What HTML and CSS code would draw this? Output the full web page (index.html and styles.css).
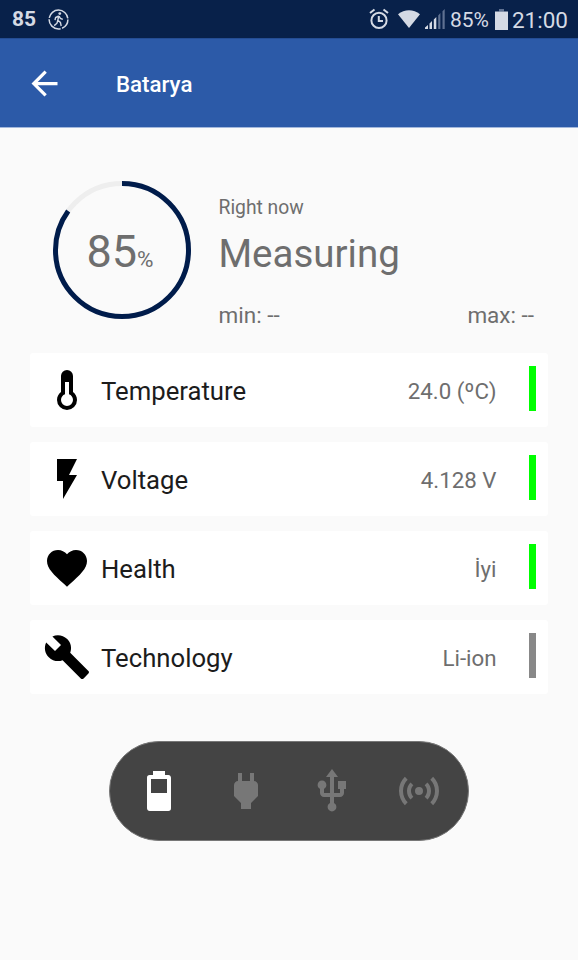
FILE: index.html
```
<!DOCTYPE html>
<html lang="tr">
<head>
  <meta charset="UTF-8" />
  <meta name="viewport" content="width=device-width, initial-scale=1.0"/>
  <title>Batarya</title>
  <link rel="stylesheet" href="styles.css">
</head>
<body>
  <div class="status-bar">
    <span class="status-level">85</span>
    <svg class="walk-icon" width="21" height="21" viewBox="0 0 21 21">
      <circle cx="10.5" cy="10.5" r="9.4" fill="none" stroke="#d5dae4" stroke-width="1.5" stroke-dasharray="11 1.5 17 1.5 26.5 1.5"/>
      <circle cx="11.8" cy="4.6" r="1.4" fill="#d5dae4"/>
      <path d="M10.8 6.8L9.8 11.3L12.4 13.4L13.2 17M9.8 11.3L9 14.2L6.2 16.6M10.8 7L7.6 8.6L7 11.2M11 7L12.4 9.4L14.8 10.4" fill="none" stroke="#d5dae4" stroke-width="1.4"/>
    </svg>
    <div class="status-right">
      <svg class="alarm-icon" width="20" height="22" viewBox="0 0 20 22">
        <circle cx="10" cy="12.4" r="7.6" fill="none" stroke="#d5dae4" stroke-width="2"/>
        <path d="M9.8 8v5h4.2M1 5L5.5 1.5M19 5L14.5 1.5" fill="none" stroke="#d5dae4" stroke-width="2"/>
      </svg>
      <svg class="wifi-icon" width="22" height="18" viewBox="0 0 22 18">
        <path d="M0 4.3C6.5-1.2 15.5-1.2 22 4.3L11 18z" fill="#d5dae4"/>
      </svg>
      <svg class="signal-icon" width="20" height="20" viewBox="0 0 20 20">
        <path d="M0 20v-1.5l3-2.5V20zM4.5 20v-5.5l2.5-2.5V20zM8.8 20v-9.5l2.5-2.5V20z" fill="#d5dae4"/>
        <path d="M13.2 20V6.5l2.2-2.5V20zM17.5 20V2.2L19.7 0V20z" fill="#5f7191"/>
      </svg>
      <span class="status-percent">85%</span>
      <svg class="battery-icon" width="13" height="21" viewBox="0 0 13 21">
        <path d="M4 0h5v2.5H4z" fill="#5f7191"/>
        <path d="M0 2.5h13V21H0z" fill="#d5dae4"/>
      </svg>
      <span class="status-clock">21:00</span>
    </div>
  </div>

  <div class="app-bar">
    <svg class="back-arrow" width="39" height="39" viewBox="0 0 24 24">
      <path d="M20 11H7.83l5.59-5.59L12 4l-8 8 8 8 1.41-1.41L7.83 13H20v-2z" fill="#fff"/>
    </svg>
    <h1 class="title">Batarya</h1>
  </div>

  <div class="summary">
    <div class="gauge">
      <svg width="138" height="138" viewBox="0 0 138 138">
        <circle class="gauge-track" cx="69" cy="69" r="66.5"/>
        <circle class="gauge-value" cx="69" cy="69" r="66.5" pathLength="100" transform="rotate(-90 69 69)"/>
      </svg>
      <div class="gauge-text">85<small>%</small></div>
    </div>
    <div class="current">
      <div class="current-label">Right now</div>
      <div class="current-state">Measuring</div>
      <div class="current-range">
        <span>min: --</span>
        <span>max: --</span>
      </div>
    </div>
  </div>

  <div class="cards">
    <div class="card">
      <svg class="card-icon" viewBox="0 0 24 24"><path d="M17 17A5 5 0 0 1 12 22A5 5 0 0 1 7 17C7 15.36 7.79 13.91 9 13V5A3 3 0 0 1 12 2A3 3 0 0 1 15 5V13C16.21 13.91 17 15.36 17 17M11 8V14.17C9.83 14.58 9 15.69 9 17A3 3 0 0 0 12 20A3 3 0 0 0 15 17C15 15.69 14.17 14.58 13 14.17V8H11Z"/></svg>
      <span class="card-name">Temperature</span>
      <span class="card-value">24.0 (ºC)</span>
      <span class="card-status good"></span>
    </div>
    <div class="card">
      <svg class="card-icon" viewBox="0 0 24 24"><path d="M7 2v11h3v9l7-12h-4l4-8z"/></svg>
      <span class="card-name">Voltage</span>
      <span class="card-value">4.128 V</span>
      <span class="card-status good"></span>
    </div>
    <div class="card">
      <svg class="card-icon" viewBox="0 0 24 24"><path d="M12 21.35l-1.45-1.32C5.4 15.36 2 12.28 2 8.5 2 5.42 4.42 3 7.5 3c1.74 0 3.41.81 4.5 2.09C13.09 3.81 14.76 3 16.5 3 19.58 3 22 5.42 22 8.5c0 3.78-3.4 6.86-8.55 11.54L12 21.35z"/></svg>
      <span class="card-name">Health</span>
      <span class="card-value">İyi</span>
      <span class="card-status good"></span>
    </div>
    <div class="card">
      <svg class="card-icon" viewBox="0 0 24 24"><path d="M22.7 19l-9.1-9.1c.9-2.3.4-5-1.5-6.9-2-2-5-2.4-7.4-1.3L9 6 6 9 1.6 4.7C.4 7.1.9 10.1 2.9 12.1c1.9 1.9 4.6 2.4 6.9 1.5l9.1 9.1c.4.4 1 .4 1.4 0l2.3-2.3c.5-.4.5-1.1.1-1.4z"/></svg>
      <span class="card-name">Technology</span>
      <span class="card-value">Li-ion</span>
      <span class="card-status"></span>
    </div>
  </div>

  <div class="sources">
    <div class="source active">
      <svg viewBox="0 0 24 24"><path d="M16 13H8V6H16M16.67 4H15V2H9V4H7.33A1.33 1.33 0 0 0 6 5.33V20.67C6 21.4 6.6 22 7.33 22H16.67A1.33 1.33 0 0 0 18 20.67V5.33C18 4.6 17.4 4 16.67 4Z"/></svg>
    </div>
    <div class="source">
      <svg viewBox="0 0 24 24"><path d="M16.01 7L16 3h-2v4h-4V3H8v4h-.01C7 6.99 6 7.99 6 8.99v5.49L9.5 18v3h5v-3l3.5-3.51v-5.5c0-1-1-2-1.99-1.99z"/></svg>
    </div>
    <div class="source">
      <svg viewBox="0 0 24 24"><path d="M15 7v4h1v2h-3V5h2l-3-4-3 4h2v8H8v-2.07c.7-.37 1.2-1.08 1.2-1.93 0-1.21-.99-2.2-2.2-2.2-1.21 0-2.2.99-2.2 2.2 0 .85.5 1.56 1.2 1.93V13c0 1.11.89 2 2 2h3v3.05c-.71.37-1.2 1.1-1.2 1.95 0 1.22.99 2.2 2.2 2.2 1.21 0 2.2-.98 2.2-2.2 0-.85-.49-1.58-1.2-1.95V15h3c1.11 0 2-.89 2-2v-2h1V7h-4z"/></svg>
    </div>
    <div class="source">
      <svg viewBox="0 0 24 24"><path d="M4.93 4.93C3.12 6.74 2 9.24 2 12C2 14.76 3.12 17.26 4.93 19.07L6.34 17.66C4.89 16.22 4 14.22 4 12C4 9.79 4.89 7.78 6.34 6.34L4.93 4.93M19.07 4.93L17.66 6.34C19.11 7.79 20 9.79 20 12C20 14.22 19.11 16.22 17.66 17.66L19.07 19.07C20.88 17.26 22 14.76 22 12C22 9.24 20.88 6.74 19.07 4.93M7.76 7.76C6.67 8.85 6 10.35 6 12C6 13.65 6.67 15.15 7.76 16.24L9.17 14.83C8.45 14.11 8 13.11 8 12C8 10.89 8.45 9.89 9.17 9.17L7.76 7.76M16.24 7.76L14.83 9.17C15.55 9.89 16 10.89 16 12C16 13.11 15.55 14.11 14.83 14.83L16.24 16.24C17.33 15.15 18 13.65 18 12C18 10.35 17.33 8.85 16.24 7.76M12 10A2 2 0 0 0 10 12A2 2 0 0 0 12 14A2 2 0 0 0 14 12A2 2 0 0 0 12 10Z"/></svg>
    </div>
  </div>
</body>
</html>
```
FILE: styles.css
```
* {
  box-sizing: border-box;
}

body {
  margin: 0;
  height: 960px;
  font-family: Roboto, sans-serif;
  background: #fafafa;
  color: #6e6e6e;
  overflow: hidden;
}

svg {
  display: block;
  flex-shrink: 0;
}

.status-bar {
  height: 38px;
  padding: 0 10px 0 12px;
  display: flex;
  align-items: center;
  background: #08214a;
  color: #d5dae4;
}

.status-level {
  width: 36px;
  font-size: 21px;
  font-weight: bold;
}

.status-right {
  margin-left: auto;
  display: flex;
  align-items: center;
}

.wifi-icon {
  margin-left: 9px;
}

.signal-icon {
  margin-left: 5px;
}

.status-percent {
  margin: 2px 0 0 5px;
  font-size: 21px;
}

.battery-icon {
  margin-left: 6px;
}

.status-clock {
  margin: 2px 0 0 4px;
  font-size: 22.5px;
}

.app-bar {
  height: 90px;
  padding-left: 25px;
  display: flex;
  align-items: center;
  background: #2c5aa8;
  border-top: 1px solid #244d94;
  border-bottom: 1px solid #a3b8dc;
}

.title {
  margin: 1px 0 0 52px;
  font-size: 22.3px;
  font-weight: 500;
  color: #fff;
}

.back-arrow {
  margin-top: 1px;
}

.summary {
  display: flex;
  padding: 53px 44px 0 53px;
  height: 224.5px;
}

.gauge {
  display: grid;
  width: 138px;
  height: 138px;
}

.gauge > * {
  grid-area: 1 / 1;
}

.gauge circle {
  fill: none;
  stroke-width: 5;
}

.gauge-track {
  stroke: #eee;
}

.gauge-value {
  stroke: #001c4b;
  stroke-dasharray: 85 100;
}

.gauge-text {
  place-self: center;
  padding: 11px 4px 0 0;
  font-size: 45px;
  line-height: 52px;
}

.gauge-text small {
  font-size: 22.5px;
}

.current {
  flex: 1;
  margin-left: 27.5px;
}

.current-label {
  margin-top: 15px;
  font-size: 19.3px;
  line-height: 24px;
}

.current-state {
  margin-top: 11px;
  font-size: 38.5px;
  line-height: 46px;
}

.current-range {
  margin-top: 24px;
  display: flex;
  justify-content: space-between;
  font-size: 22.5px;
  line-height: 28px;
}

.cards {
  padding: 0 30px;
  display: grid;
  gap: 15px;
}

.card {
  height: 74px;
  padding: 0 12px 0 13px;
  display: flex;
  align-items: center;
  background: #fff;
  border-radius: 3px;
}

.card-icon {
  width: 48px;
  height: 48px;
  fill: #000;
}

.card-name {
  margin: 3px 0 0 10px;
  font-size: 25.7px;
  color: #1c1c1c;
}

.card-value {
  margin: 3px 0 0 auto;
  font-size: 22.3px;
}

.card-status {
  width: 7px;
  height: 45px;
  margin: 0 0 3px 32.5px;
  background: #888;
}

.card-status.good {
  background: #0f0;
}

.sources {
  width: 360px;
  height: 100px;
  margin: 47px 0 0 109px;
  padding: 0 6px;
  display: flex;
  align-items: center;
  background: #444;
  border: 1px solid #777;
  border-radius: 50px;
}

.source {
  flex: 1;
  display: flex;
  justify-content: center;
  fill: #777;
}

.source svg {
  width: 48px;
  height: 48px;
}

.source.active {
  fill: #fff;
}
```
